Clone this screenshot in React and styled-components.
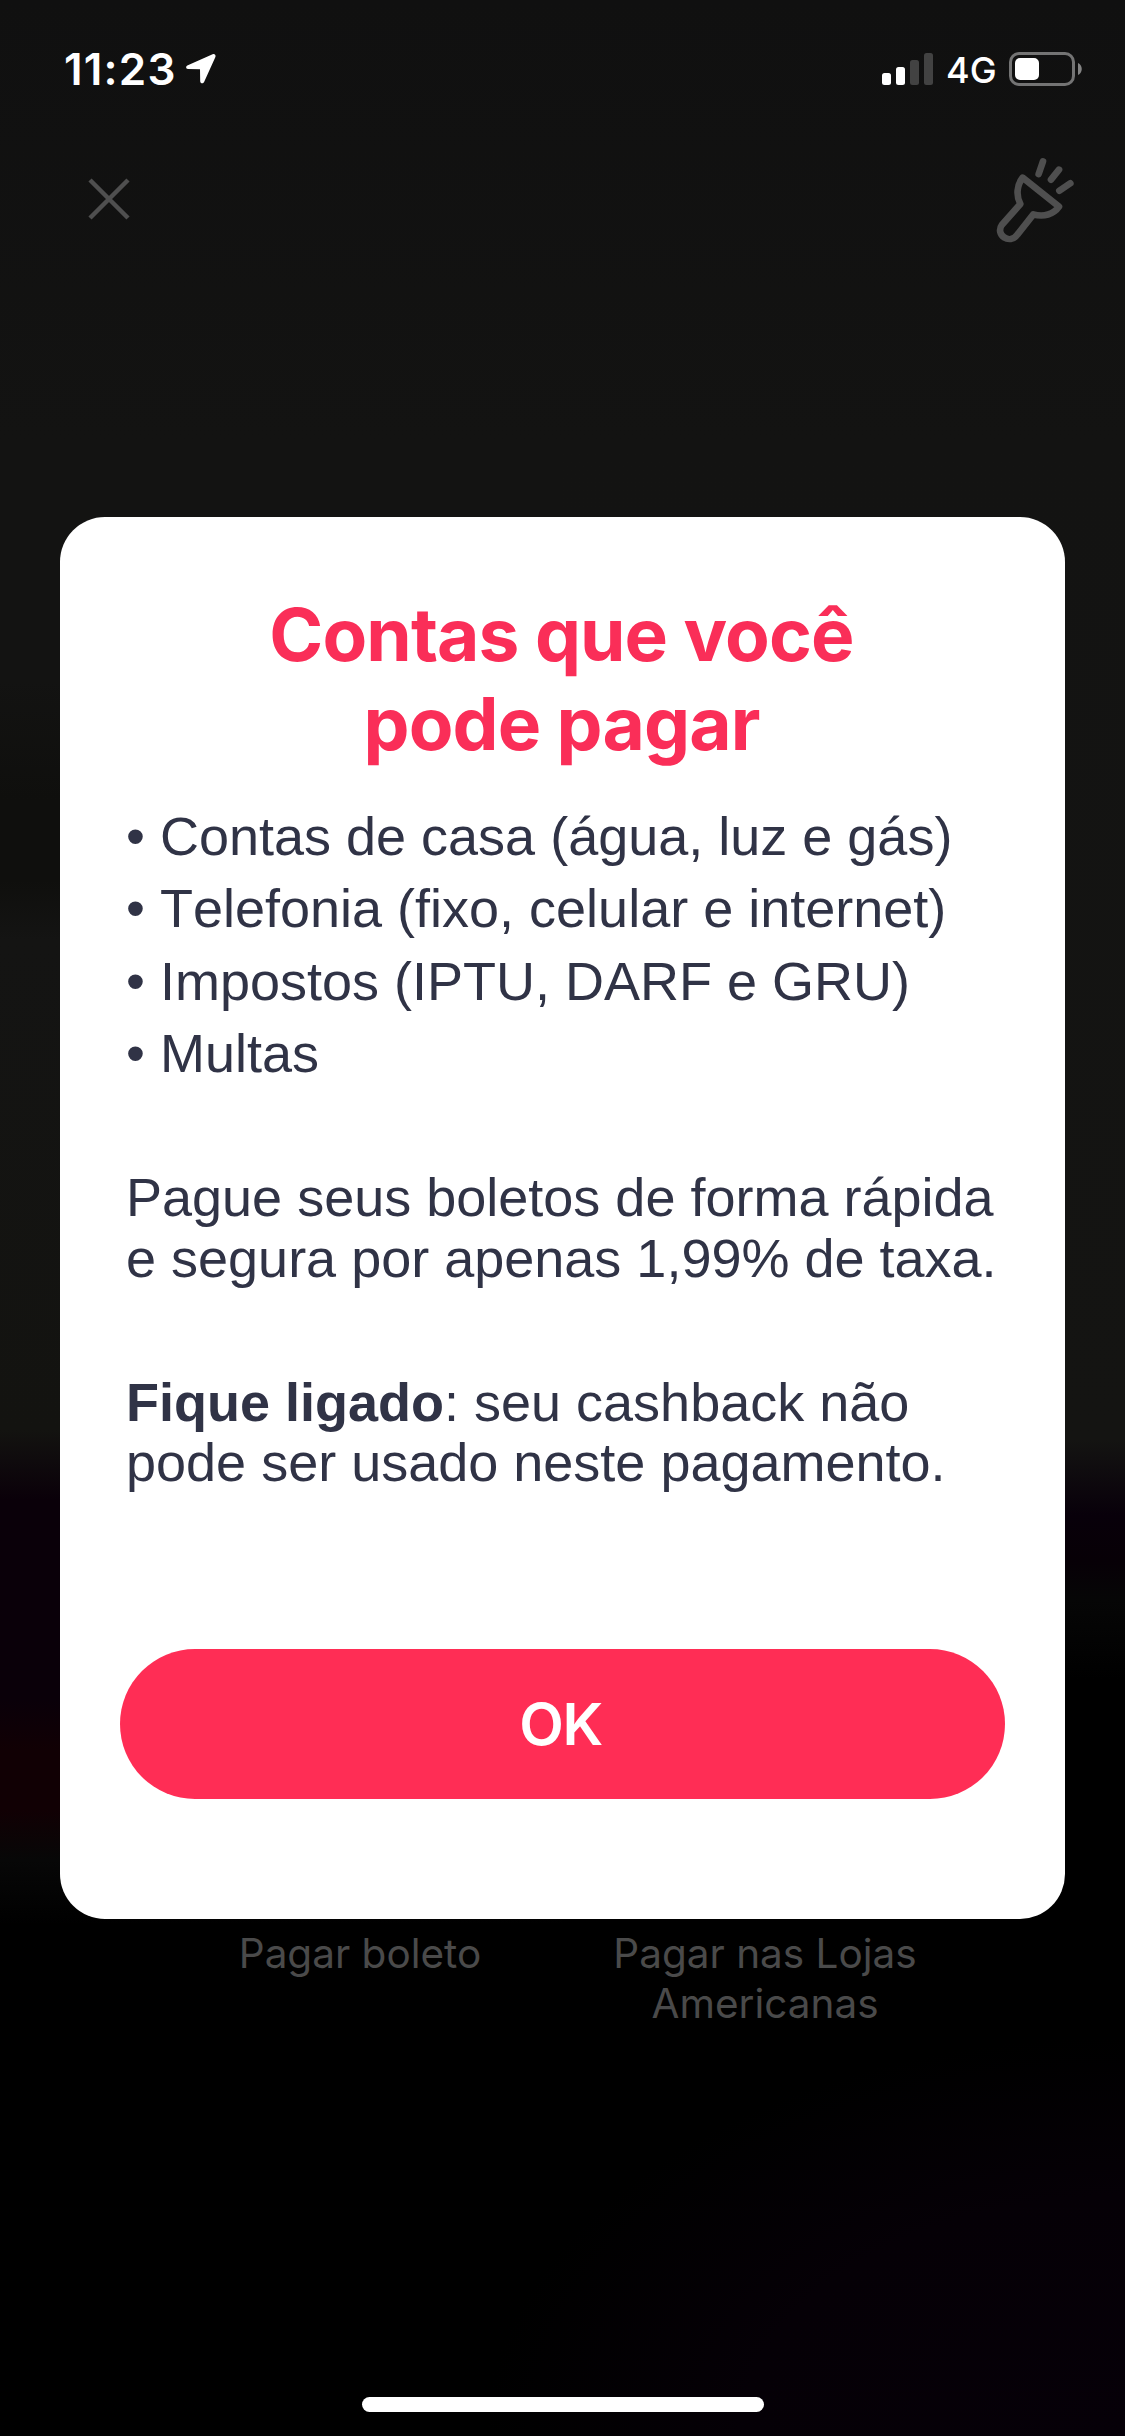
import React from "react";
import styled, { createGlobalStyle } from "styled-components";

const GlobalStyle = createGlobalStyle`
  * {
    box-sizing: border-box;
  }
  body {
    margin: 0;
    background: #000;
  }
`;

// dimmed camera preview, the left and right edges are lit differently
const Screen = styled.div`
  display: flex;
  flex-direction: column;
  width: 1125px;
  height: 2436px;
  overflow: hidden;
  font-family: Inter, "Liberation Sans", sans-serif;
  background:
    radial-gradient(ellipse 640px 400px at 1125px 2436px, #060008 0%, #050006 60%, rgba(5, 0, 6, 0) 100%) no-repeat,
    linear-gradient(
      180deg,
      #101010 0,
      #131312 440px,
      #131312 680px,
      #0f0f0d 800px,
      #0f0f0d 880px,
      #141413 940px,
      #131310 1430px,
      #0a0009 1500px,
      #0a0009 1700px,
      #110004 1750px,
      #110004 1810px,
      #070707 1860px,
      #000 1925px
    ) left top / 562px 100% no-repeat,
    linear-gradient(
      180deg,
      #101010 0,
      #131312 440px,
      #141412 1440px,
      #08000a 1515px,
      #070006 1560px,
      #060606 1600px,
      #000 1680px
    );
`;

const StatusBar = styled.header`
  display: flex;
  justify-content: space-between;
  height: 132px;
  padding: 44px 42px 0 64px;
  color: #fff;
`;

const StatusGroup = styled.div`
  display: flex;
  align-items: center;
  height: 50px;
`;

const Clock = styled.span`
  width: 115px;
  margin-right: 7px;
  font-size: 44px;
  font-weight: 600;
  line-height: 50px;
  letter-spacing: 1.2px;
  white-space: nowrap;
`;

const Network = styled.span`
  width: 51px;
  margin: 2px 12px 0 12px;
  font-size: 36px;
  font-weight: 450;
  line-height: 50px;
  white-space: nowrap;
`;

const Toolbar = styled.nav`
  display: flex;
  justify-content: space-between;
  height: 385px;
  padding: 24px 50px 0 87px;
`;

const IconButton = styled.button`
  height: ${(props) => props.$height}px;
  margin-top: ${(props) => props.$offset || 0}px;
  padding: 0;
  border: 0;
  background: none;
  color: #4f4f4f;
`;

const Card = styled.main`
  display: flex;
  flex-direction: column;
  height: 1402px;
  margin: 0 60px;
  padding: 73px 60px 120px;
  border-radius: 45px;
  background: #fff;
`;

const Title = styled.h1`
  margin: 0;
  padding-right: 2px;
  color: #fa2e58;
  font-size: 73px;
  font-weight: 700;
  line-height: 89px;
  letter-spacing: -0.9px;
  text-align: center;
`;

const Content = styled.div`
  flex: 1;
  padding: 32px 0 0 6px;
  color: #303346;
  font-family: "Liberation Sans", Arial, sans-serif;
  font-size: 54px;
  font-kerning: none;
  white-space: nowrap;
`;

const BulletList = styled.ul`
  margin: 0;
  padding: 0;
  list-style: none;
  line-height: 72.3px;
`;

const Paragraph = styled.p`
  margin: 0;
  padding-top: ${(props) => props.$gap}px;
  line-height: 60.4px;
`;

const OkButton = styled.button`
  height: 150px;
  padding: 0 4px 0 0;
  border: 0;
  border-radius: 75px;
  background: #ff2d55;
  color: #fff;
  font-family: inherit;
  font-size: 58px;
  font-weight: 600;
  letter-spacing: -1.5px;
`;

const Options = styled.div`
  display: flex;
  flex: 1;
  justify-content: center;
  padding-top: 10px;
`;

const Option = styled.div`
  width: 405px;
  color: #4a4a4a;
  font-size: 40.5px;
  line-height: 50px;
  text-align: center;
`;

const HomeIndicator = styled.div`
  width: 402px;
  height: 15px;
  margin: 0 auto 24px;
  border-radius: 8px;
  background: #fff;
`;

const items = [
  "Contas de casa (água, luz e gás)",
  "Telefonia (fixo, celular e internet)",
  "Impostos (IPTU, DARF e GRU)",
  "Multas",
];

const LocationIcon = () => (
  <svg width="30" height="30" viewBox="0 0 30 30" fill="#fff">
    <path d="M26.6 0.3 1.3 11.6C-.5 12.5-.2 15 2 15.1l12 .2.2 11.9c.1 2.4 2.9 2.8 3.9.7L29.3 3.2C30.2 1.2 28.5-.5 26.6.3z" />
  </svg>
);

const SignalIcon = () => (
  <svg width="52" height="32" viewBox="0 0 52 32" fill="#fff">
    <rect x="0" y="20" width="9" height="12" rx="2.5" />
    <rect x="14" y="14" width="9" height="18" rx="2.5" />
    <rect x="28" y="7" width="9" height="25" rx="2.5" fill="#424242" />
    <rect x="42" y="0" width="9" height="32" rx="2.5" fill="#424242" />
  </svg>
);

const BatteryIcon = () => (
  <svg width="74" height="34" viewBox="0 0 74 34">
    <rect x="1.5" y="1.5" width="63" height="31" rx="8.5" fill="none" stroke="#747474" strokeWidth="3" />
    <rect x="6" y="6" width="24" height="22" rx="5" fill="#fff" />
    <path d="M69 11v12c5-2 5-10 0-12z" fill="#848484" />
  </svg>
);

const CloseIcon = () => (
  <svg width="44" height="44" viewBox="0 0 44 44" fill="none" stroke="currentColor" strokeWidth="4.5">
    <path d="M3 3l38 38M41 3l-38 38" />
  </svg>
);

const FlashlightIcon = () => (
  <svg
    width="80"
    height="90"
    viewBox="405 375 240 270"
    fill="none"
    stroke="currentColor"
    strokeWidth="20"
    strokeLinecap="round"
    strokeLinejoin="round"
  >
    <path d="M488 440 597 527C581 550 551 559 520 550L472 611C450 642 404 612 426 581L481 519C468 494 470 463 488 440z" />
    <path d="M549 391 536 429M597 416 573 446M631 457 598 479" />
  </svg>
);

const App = () => (
  <Screen>
    <GlobalStyle />
    <StatusBar>
      <StatusGroup>
        <Clock>11:23</Clock>
        <LocationIcon />
      </StatusGroup>
      <StatusGroup>
        <SignalIcon />
        <Network>4G</Network>
        <BatteryIcon />
      </StatusGroup>
    </StatusBar>
    <Toolbar>
      <IconButton $height={44} $offset={21} aria-label="Fechar">
        <CloseIcon />
      </IconButton>
      <IconButton $height={90} aria-label="Lanterna">
        <FlashlightIcon />
      </IconButton>
    </Toolbar>
    <Card>
      <Title>
        Contas que você
        <br />
        pode pagar
      </Title>
      <Content>
        <BulletList>
          {items.map((item) => (
            <li key={item}>• {item}</li>
          ))}
        </BulletList>
        <Paragraph $gap={78}>
          Pague seus boletos de forma rápida
          <br />e segura por apenas 1,99% de taxa.
        </Paragraph>
        <Paragraph $gap={84}>
          <strong>Fique ligado</strong>: seu cashback não
          <br />
          pode ser usado neste pagamento.
        </Paragraph>
      </Content>
      <OkButton>OK</OkButton>
    </Card>
    <Options>
      <Option>Pagar boleto</Option>
      <Option>
        Pagar nas Lojas
        <br />
        Americanas
      </Option>
    </Options>
    <HomeIndicator />
  </Screen>
);

export default App;
